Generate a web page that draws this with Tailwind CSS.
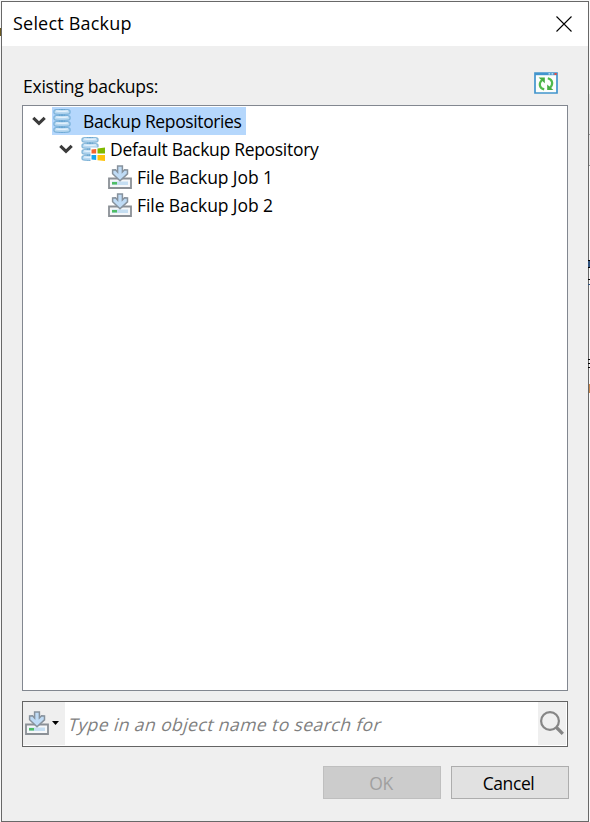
<!DOCTYPE html>
<html lang="en">
<head>
<meta charset="utf-8">
<title>Select Backup</title>
<script src="https://cdn.jsdelivr.net/npm/@tailwindcss/browser@4"></script>
</head>
<body class="relative h-[822px] w-[590px] overflow-hidden bg-[#f8f8f8] pt-px pl-px font-['Open_Sans','Noto_Sans',sans-serif] text-[17.5px] leading-7 text-black">
<svg class="absolute h-0 w-0" aria-hidden="true">
  <defs>
    <symbol id="job" viewBox="0 0 24 24">
      <path d="M1 13.5h22V23H1z" fill="#f5f7f9" stroke="#8b9096" stroke-width="1.8"/>
      <path d="M4 16.5h16v3.5H4z" fill="#c5def2"/>
      <path d="M4 17h5v2.500H4z" fill="#4fbd65"/>
      <path d="M9.600 1h4.800v6l2.200-2.300 2.900.2v3.900L12 15.800 4.600 8.800V4.900l2.900-.2L9.600 7z" fill="#bfdbf5" stroke="#87929d" stroke-width="1.5"/>
    </symbol>
    <symbol id="disk" viewBox="0 0 18 6">
      <path d="M1 1.500C1 .8 4 .5 9 .5s8 .3 8 1v2.800c0 .7-3 1.100-8 1.100s-8-.4-8-1.100z" fill="#b9d9f1" stroke="#5f9fcc" stroke-width=".9"/>
      <path d="M3 1.900c3 .5 9 .5 12 0" fill="none" stroke="#e3f1fc" stroke-width="1.100"/>
    </symbol>
    <symbol id="chevron" viewBox="0 0 14 10">
      <path d="M1.300 1.800 7 7.400l5.700-5.600" fill="none" stroke="#3b3b3b" stroke-width="3.100"/>
    </symbol>
  </defs>
</svg>

<main class="flex h-[821px] w-[588px] flex-col border border-[#686868] bg-[#efefef]">
  <header class="flex h-11 shrink-0 items-center justify-between bg-white pr-[16.5px] pl-[11px]">
    <h1 class="whitespace-nowrap pb-[2px] text-[18px] leading-[26px] tracking-[0.2px]">Select Backup</h1>
    <button class="h-4 w-4" aria-label="Close"><svg class="block h-4 w-4" viewBox="0 0 16 16"><path d="m.5.5 15 15m0-15-15 15" stroke="#000" stroke-width="1.100"/></svg></button>
  </header>

  <div class="flex h-[59px] shrink-0 justify-between pr-[30px] pl-[21px]">
    <span class="mt-[26px] whitespace-nowrap tracking-[-0.25px]">Existing backups:</span>
    <button class="mt-[26px] h-[22px] w-6" aria-label="Refresh">
      <svg class="block h-[22px] w-6" viewBox="0 0 24 22">
        <path d="M1 1h22v20H1z" fill="#fbfdfb" stroke="#4295cd" stroke-width="1.700"/>
        <path d="M1 1h22v2.200H1z" fill="#4295cd"/>
        <path d="M14.500 1.200h1.700v1.300h-1.700zm3 0h1.700v1.300h-1.700z" fill="#d8edf9"/>
        <path d="M20.500 1h2.200v2h-2.200z" fill="#e44b45"/>
        <path d="M10.200 17.400C4.800 16 4.800 11 8 8" fill="none" stroke="#50b94b" stroke-width="2.200"/>
        <path d="M4.600 5.600h6.200v5.600z" fill="#45ad42"/>
        <path d="M13.800 6.200c5.400 1.400 5.400 6.400 2.200 9.400" fill="none" stroke="#50b94b" stroke-width="2.200"/>
        <path d="M19.400 18h-6.200v-5.600z" fill="#45ad42"/>
      </svg>
    </button>
  </div>

  <section class="mx-auto h-[586px] w-[546px] shrink-0 border border-[#828790] bg-white pt-px" role="tree">
    <div class="flex h-7 items-center pl-[8.500px]">
      <svg class="h-[10px] w-[14px]"><use href="#chevron"/></svg>
      <div class="ml-[6.500px] flex h-7 w-[194px] items-center bg-[#b5d7fc] pl-px">
        <svg class="h-6 w-[18px] shrink-0" viewBox="0 0 18 24">
          <use href="#disk" y="18" width="18" height="6"/><use href="#disk" y="12" width="18" height="6"/><use href="#disk" y="6" width="18" height="6"/><use href="#disk" width="18" height="6"/>
        </svg>
        <span class="ml-[12px] whitespace-nowrap tracking-[-0.38px]">Backup Repositories</span>
      </div>
    </div>
    <div class="flex h-7 items-center pl-[35.500px]">
      <svg class="h-[10px] w-[14px]"><use href="#chevron"/></svg>
      <svg class="ml-[8.500px] h-6 w-6" viewBox="0 0 24 24">
        <use href="#disk" y="18" width="18" height="6"/><use href="#disk" y="12" width="18" height="6"/><use href="#disk" y="6" width="18" height="6"/><use href="#disk" width="18" height="6"/>
        <path d="M9.500 10.500H24V24H9.500z" fill="#fff"/>
        <path d="m10.500 12.500 4.700-.6v4.500h-4.700z" fill="#f4642d"/><path d="m16.500 11.400 7.500-.9v6h-7.500z" fill="#80b900"/>
        <path d="M10.500 18h4.700v5l-4.700-.6z" fill="#16a5ed"/><path d="M16.500 18H24v6l-7.500-.7z" fill="#fec30a"/>
      </svg>
      <span class="ml-[5px] whitespace-nowrap tracking-[-0.3px]">Default Backup Repository</span>
    </div>
    <div class="flex h-7 items-center pl-[85px]">
      <svg class="h-6 w-6"><use href="#job"/></svg>
      <span class="ml-[5px] whitespace-nowrap tracking-[-0.08px]">File Backup Job 1</span>
    </div>
    <div class="flex h-7 items-center pl-[85px]">
      <svg class="h-6 w-6"><use href="#job"/></svg>
      <span class="ml-[5px] whitespace-nowrap tracking-[-0.08px]">File Backup Job 2</span>
    </div>
  </section>

  <div class="mx-auto mt-[10px] flex h-[46px] w-[546px] shrink-0 border border-[#646464] bg-white" role="search">
    <button class="flex h-[43px] w-[42px] items-center bg-[#efefef] pb-px pl-[2px]" aria-label="Object type">
      <svg class="h-6 w-6"><use href="#job"/></svg>
      <svg class="ml-[3px] h-1 w-[7px]" viewBox="0 0 7 4"><path d="M0 0h7L3.500 4z"/></svg>
    </button>
    <span class="ml-[4px] flex-1 whitespace-nowrap leading-[44px] text-[#808080]"><span class="inline-block -skew-x-[16deg] tracking-[0.43px]">Type in an object name to search for</span></span>
    <button class="mr-px flex h-[43px] w-7 items-center justify-center bg-[#efefef] pb-[2px]" aria-label="Search">
      <svg class="h-6 w-6" viewBox="0 0 24 24" fill="none" stroke="#858585"><circle cx="10" cy="10" r="8.900" stroke-width="2.200"/><path d="m16.500 16.500 6.300 6.300" stroke-width="3.300"/></svg>
    </button>
  </div>

  <footer class="mt-[19px] flex h-[33px] shrink-0 justify-end gap-[10px] pr-[19px]">
    <button class="h-[33px] w-[118px] border border-[#bfbfbf] bg-[#cccccc] pr-[2px] leading-[33px] tracking-[-0.500px] text-[#a0a0a0]" disabled>OK</button>
    <button class="h-[33px] w-[118px] border border-[#adadad] bg-[#e1e1e1] pr-[3px] leading-[33px] tracking-[-0.400px]">Cancel</button>
  </footer>
</main>

<!-- Slivers of the windows behind the dialog -->
<div class="absolute top-[28px] left-0 h-2 w-px bg-[#6b5a20]"></div>
<div class="absolute top-[94px] right-0 h-[72px] w-px border-b border-[#9a9a9a] bg-[#e6e6e6]"></div>
<div class="absolute top-[134px] right-0 h-px w-px bg-[#9a9a9a]"></div>
<div class="absolute top-[260px] right-0 h-2 w-[2px] border-y border-black bg-[#31537d]"></div>
<div class="absolute top-[279px] right-0 h-[6px] w-[2px] border-t border-b border-t-black border-b-[#31537d]"></div>
<div class="absolute top-[359px] right-0 h-[5px] w-[2px] border-y border-black"></div>
<div class="absolute top-[367px] right-0 h-px w-[2px] bg-black"></div>
<div class="absolute top-[384px] right-0 h-[9px] w-px bg-[#c8864b]"></div>
</body>
</html>
